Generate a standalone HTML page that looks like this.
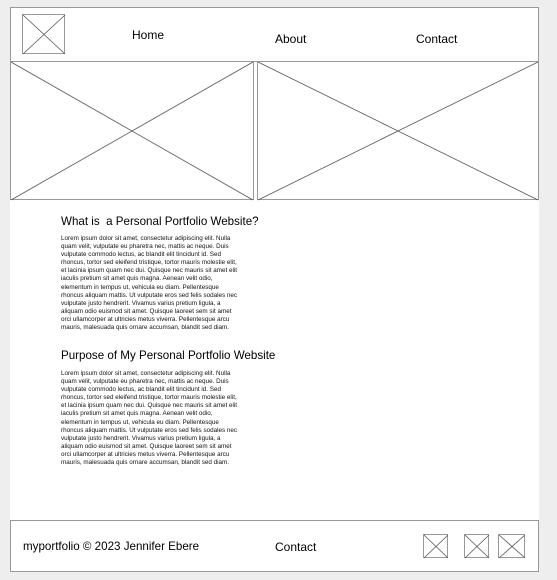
<!DOCTYPE html>
<html><head><meta charset="utf-8"><style>
*{margin:0;padding:0;box-sizing:border-box}
body{width:557px;height:580px;background:#eeeeee;position:relative;font-family:"Liberation Sans",Arial,sans-serif;color:#000;overflow:hidden}
.abs{position:absolute}
.nav{font-size:12px}
h2{position:absolute;font-weight:normal;font-size:11.6px;left:61px}
.p{position:absolute;left:61px;font-size:6.3px;line-height:8.1px;color:#111;white-space:pre}
</style></head><body>
<div class="abs" style="left:10px;top:7px;width:529px;height:565px;background:#fff"></div>
<svg class="abs" style="left:0;top:0" width="557" height="580">
<g fill="none" stroke="#999" stroke-width="1">
<rect x="10.5" y="7.5" width="528" height="54"/>
<rect x="22.5" y="14.5" width="42" height="39"/>
<rect x="10.5" y="61.5" width="243" height="138"/>
<rect x="257.5" y="61.5" width="281" height="138"/>
<rect x="10.5" y="520.5" width="528" height="51"/>
<rect x="423.5" y="534.5" width="24" height="23"/>
<rect x="464.5" y="534.5" width="24" height="23"/>
<rect x="498.5" y="534.5" width="26" height="23"/>
</g>
<g stroke="#555" stroke-width="0.8">
<line x1="23" y1="15" x2="65" y2="54"/><line x1="65" y1="15" x2="23" y2="54"/>
<line x1="11" y1="62" x2="253" y2="200"/><line x1="253" y1="62" x2="11" y2="200"/>
<line x1="258" y1="62" x2="538" y2="200"/><line x1="538" y1="62" x2="258" y2="200"/>
<line x1="424" y1="535" x2="448" y2="558"/><line x1="448" y1="535" x2="424" y2="558"/>
<line x1="465" y1="535" x2="489" y2="558"/><line x1="489" y1="535" x2="465" y2="558"/>
<line x1="499" y1="535" x2="525" y2="558"/><line x1="525" y1="535" x2="499" y2="558"/>
</g>
</svg>
<div class="abs nav" style="left:132px;top:28px">Home</div>
<div class="abs nav" style="left:275px;top:32px">About</div>
<div class="abs nav" style="left:416px;top:32px">Contact</div>
<h2 style="top:215px">What is &nbsp;a Personal Portfolio Website?</h2>
<div class="p" style="top:235px">Lorem ipsum dolor sit amet, consectetur adipiscing elit. Nulla
quam velit, vulputate eu pharetra nec, mattis ac neque. Duis
vulputate commodo lectus, ac blandit elit tincidunt id. Sed
rhoncus, tortor sed eleifend tristique, tortor mauris molestie elit,
et lacinia ipsum quam nec dui. Quisque nec mauris sit amet elit
iaculis pretium sit amet quis magna. Aenean velit odio,
elementum in tempus ut, vehicula eu diam. Pellentesque
rhoncus aliquam mattis. Ut vulputate eros sed felis sodales nec
vulputate justo hendrerit. Vivamus varius pretium ligula, a
aliquam odio euismod sit amet. Quisque laoreet sem sit amet
orci ullamcorper at ultricies metus viverra. Pellentesque arcu
mauris, malesuada quis ornare accumsan, blandit sed diam.</div>
<h2 style="top:349px">Purpose of My Personal Portfolio Website</h2>
<div class="p" style="top:370px">Lorem ipsum dolor sit amet, consectetur adipiscing elit. Nulla
quam velit, vulputate eu pharetra nec, mattis ac neque. Duis
vulputate commodo lectus, ac blandit elit tincidunt id. Sed
rhoncus, tortor sed eleifend tristique, tortor mauris molestie elit,
et lacinia ipsum quam nec dui. Quisque nec mauris sit amet elit
iaculis pretium sit amet quis magna. Aenean velit odio,
elementum in tempus ut, vehicula eu diam. Pellentesque
rhoncus aliquam mattis. Ut vulputate eros sed felis sodales nec
vulputate justo hendrerit. Vivamus varius pretium ligula, a
aliquam odio euismod sit amet. Quisque laoreet sem sit amet
orci ullamcorper at ultricies metus viverra. Pellentesque arcu
mauris, malesuada quis ornare accumsan, blandit sed diam.</div>
<div class="abs nav" style="left:23px;top:540px;font-size:11.6px">myportfolio © 2023 Jennifer Ebere</div>
<div class="abs nav" style="left:275px;top:540px">Contact</div>
</body></html>
